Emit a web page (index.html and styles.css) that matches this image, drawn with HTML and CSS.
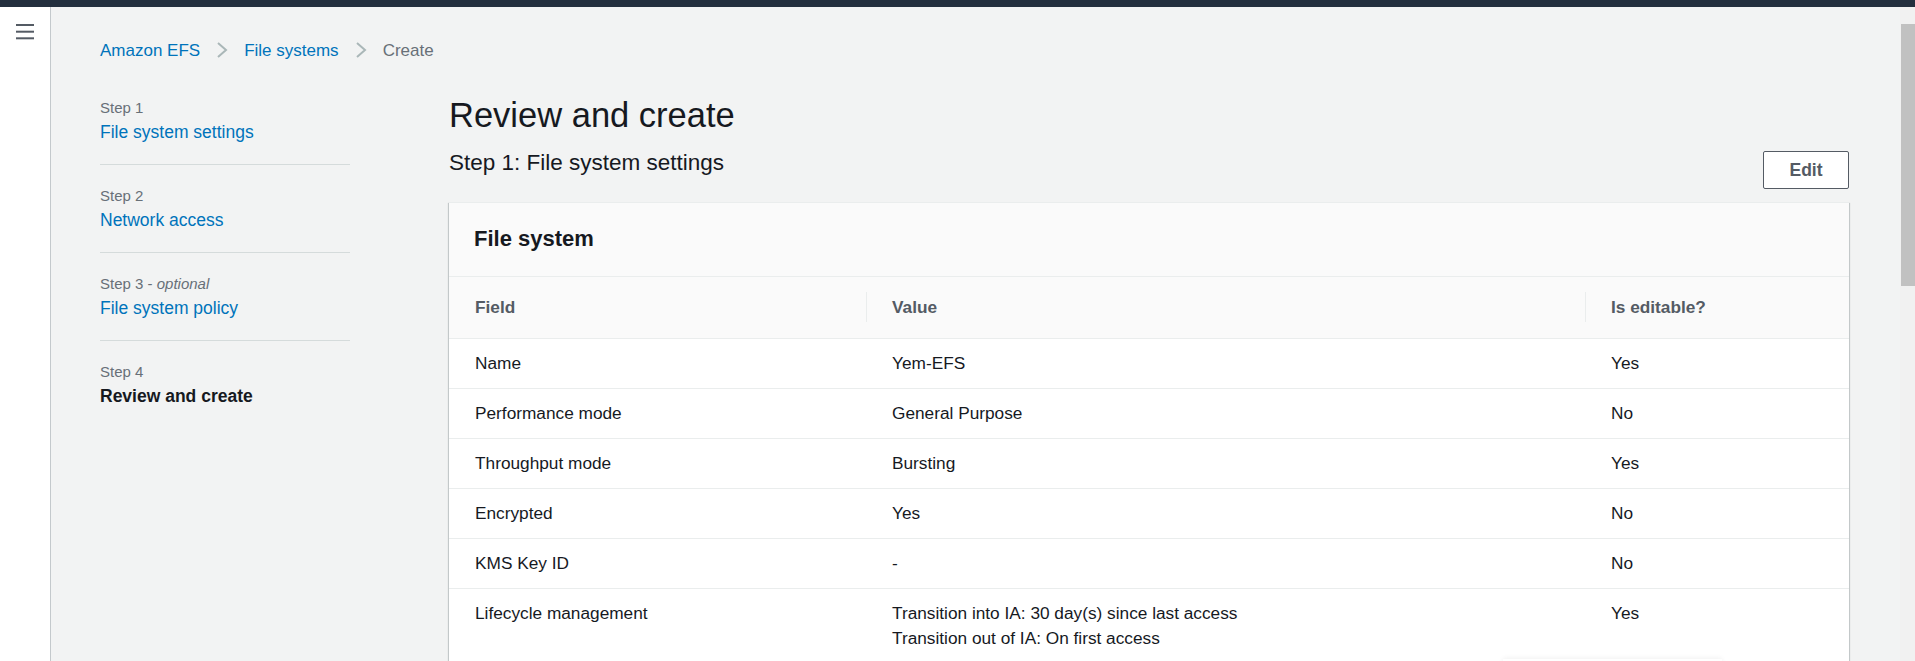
FILE: index.html
```html
<!DOCTYPE html>
<html lang="en">
<head>
<meta charset="utf-8">
<title>Create file system - Amazon EFS</title>
<link rel="stylesheet" href="styles.css">
</head>
<body>
<div class="topbar"></div>
<div class="app">
  <aside class="sidenav">
    <button class="menu" aria-label="Open navigation">
      <svg width="18" height="16" viewBox="0 0 18 16"><rect x="0" y="0" width="18" height="2" fill="#545b64"/><rect x="0" y="6.7" width="18" height="2" fill="#545b64"/><rect x="0" y="13.3" width="18" height="2" fill="#545b64"/></svg>
    </button>
  </aside>
  <main class="main">
    <nav class="breadcrumbs">
      <a class="crumb-link">Amazon EFS</a>
      <svg class="chev" width="12" height="18" viewBox="0 0 12 18"><polyline points="2,2 10,9 2,16" fill="none" stroke="#aab7b8" stroke-width="2"/></svg>
      <a class="crumb-link">File systems</a>
      <svg class="chev" width="12" height="18" viewBox="0 0 12 18"><polyline points="2,2 10,9 2,16" fill="none" stroke="#aab7b8" stroke-width="2"/></svg>
      <span class="crumb-current">Create</span>
    </nav>
    <div class="layout">
      <ol class="steps">
        <li class="step">
          <div class="step-num">Step 1</div>
          <a class="step-link">File system settings</a>
        </li>
        <li class="step">
          <div class="step-num">Step 2</div>
          <a class="step-link">Network access</a>
        </li>
        <li class="step">
          <div class="step-num">Step 3 - <i>optional</i></div>
          <a class="step-link">File system policy</a>
        </li>
        <li class="step step-last">
          <div class="step-num">Step 4</div>
          <span class="step-current">Review and create</span>
        </li>
      </ol>
      <section class="content">
        <h1 class="title">Review and create</h1>
        <div class="section-head">
          <h2 class="section-title">Step 1: File system settings</h2>
          <button class="btn">Edit</button>
        </div>
        <div class="card">
          <div class="card-header"><h3 class="card-title">File system</h3></div>
          <div class="table">
            <div class="row head">
              <div class="cell">Field</div>
              <div class="cell sep">Value</div>
              <div class="cell sep">Is editable?</div>
            </div>
            <div class="row">
              <div class="cell">Name</div>
              <div class="cell">Yem-EFS</div>
              <div class="cell">Yes</div>
            </div>
            <div class="row">
              <div class="cell">Performance mode</div>
              <div class="cell">General Purpose</div>
              <div class="cell">No</div>
            </div>
            <div class="row">
              <div class="cell">Throughput mode</div>
              <div class="cell">Bursting</div>
              <div class="cell">Yes</div>
            </div>
            <div class="row">
              <div class="cell">Encrypted</div>
              <div class="cell">Yes</div>
              <div class="cell">No</div>
            </div>
            <div class="row">
              <div class="cell">KMS Key ID</div>
              <div class="cell">-</div>
              <div class="cell">No</div>
            </div>
            <div class="row">
              <div class="cell">Lifecycle management</div>
              <div class="cell">Transition into IA: 30 day(s) since last access<br>Transition out of IA: On first access</div>
              <div class="cell">Yes</div>
            </div>
          </div>
          <div class="floating"></div>
        </div>
      </section>
    </div>
  </main>
  <div class="scrollbar"><div class="thumb"></div></div>
</div>
</body>
</html>
```
FILE: styles.css
```css
* { box-sizing: border-box; }
html, body {
  margin: 0;
  padding: 0;
  height: 661px;
  overflow: hidden;
  font-family: "Liberation Sans", Arial, sans-serif;
  color: #16191f;
  background: #f2f3f3;
}
.topbar {
  height: 7px;
  background: #232f3e;
}
.app {
  display: flex;
  height: 654px;
  overflow: hidden;
}
.sidenav {
  flex: none;
  width: 51px;
  background: #ffffff;
  border-right: 1px solid #c4c9cc;
  padding: 17px 0 0 16px;
}
.menu {
  display: block;
  border: 0;
  padding: 0;
  margin: 0;
  background: none;
  line-height: 0;
}
.main {
  flex: 1;
  min-width: 0;
  padding: 30.5px 51px 0 49px;
  background: #f2f3f3;
  overflow: hidden;
}
.scrollbar {
  flex: none;
  width: 15px;
  background: #f1f1f1;
  padding-top: 17px;
}
.thumb {
  height: 262px;
  background: #c1c1c1;
  margin-left: 1px;
}
.breadcrumbs {
  display: flex;
  align-items: center;
  height: 25px;
  font-size: 17px;
  line-height: 25px;
}
.crumb-link { color: #0073bb; }
.crumb-current { color: #687078; }
.chev { margin: 0 16px 0 16px; flex: none; }
.layout {
  display: flex;
  align-items: flex-start;
  gap: 99px;
  margin-top: 32.5px;
}
.steps {
  flex: none;
  width: 250px;
  list-style: none;
  margin: 0;
  padding: 3px 0 0 0;
}
.step {
  padding-bottom: 19px;
  border-bottom: 1px solid #d5dbdb;
  margin-bottom: 21px;
}
.step-last { border-bottom: 0; }
.step-num {
  font-size: 15px;
  line-height: 20px;
  color: #687078;
  margin-bottom: 2px;
}
.step-link, .step-current {
  display: block;
  font-size: 17.5px;
  line-height: 25px;
  color: #0073bb;
}
.step-current {
  color: #16191f;
  font-weight: bold;
}
.content {
  flex: 1;
  min-width: 0;
}
.title {
  margin: 0;
  font-size: 34.5px;
  line-height: 40px;
  font-weight: normal;
  color: #16191f;
}
.section-head {
  display: flex;
  justify-content: space-between;
  align-items: flex-start;
  margin-top: 13px;
}
.section-title {
  margin: 0;
  font-size: 22.5px;
  line-height: 30px;
  font-weight: normal;
}
.btn {
  margin-top: 3px;
  width: 86px;
  height: 38px;
  border: 1px solid #545b64;
  border-radius: 2px;
  background: #ffffff;
  color: #545b64;
  font-family: "Liberation Sans", Arial, sans-serif;
  font-weight: bold;
  font-size: 17.5px;
  padding: 0;
}
.card {
  position: relative;
  margin-top: 13px;
  background: #ffffff;
  box-shadow: 0 1px 1px 0 rgba(0, 28, 36, 0.3), 1px 1px 1px 0 rgba(0, 28, 36, 0.15), -1px 1px 1px 0 rgba(0, 28, 36, 0.15);
  border-top: 1px solid #eaeded;
}
.card-header {
  background: #fafafa;
  padding: 21px 26px 22px 25px;
  border-bottom: 1px solid #eaeded;
}
.card-title {
  margin: 0;
  font-size: 22px;
  line-height: 30px;
  font-weight: bold;
  color: #16191f;
}
.table {
  font-size: 17.25px;
  line-height: 25px;
}
.row {
  display: grid;
  grid-template-columns: 417px 719px 1fr;
  border-bottom: 1px solid #eaeded;
}
.row .cell {
  padding: 12px 26px;
}
.row.head {
  background: #fafafa;
}
.row.head .cell {
  position: relative;
  padding: 18px 26px;
  font-weight: bold;
  color: #545b64;
}
.row.head .cell.sep::before {
  content: "";
  position: absolute;
  left: 0;
  top: 15px;
  bottom: 16px;
  width: 1px;
  background: #eaeded;
}
.floating {
  position: absolute;
  left: 1054px;
  top: 456px;
  width: 219px;
  height: 60px;
  background: #ffffff;
  box-shadow: 0 -1px 5px rgba(0, 0, 0, 0.06);
}
```
